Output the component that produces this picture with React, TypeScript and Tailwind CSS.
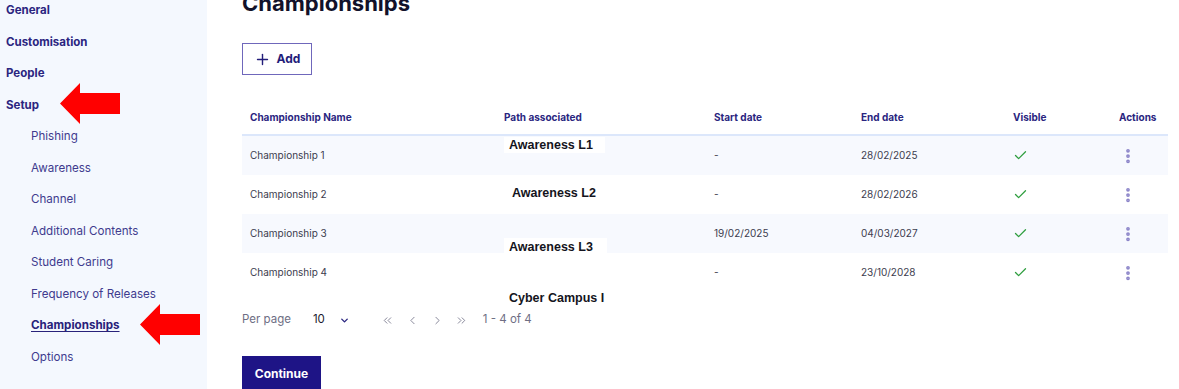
import React from "react";
import { ChevronLeft, ChevronRight, ChevronsLeft, ChevronsRight, ChevronDown, Plus, Check, EllipsisVertical } from "lucide-react";

// sidebar data
const topItems = ["General", "Customisation", "People", "Setup"];
const setupItems = [
    "Phishing",
    "Awareness",
    "Channel",
    "Additional Contents",
    "Student Caring",
    "Frequency of Releases",
    "Championships",
    "Options",
];

// table rows
const rows = [
    { name: "Championship 1", start: "-", end: "28/02/2025" },
    { name: "Championship 2", start: "-", end: "28/02/2026" },
    { name: "Championship 3", start: "19/02/2025", end: "04/03/2027" },
    { name: "Championship 4", start: "-", end: "23/10/2028" },
];

const gridCols = "grid grid-cols-[254px_210px_147px_152px_106px_1fr] items-center";

// red arrow callout
const RedArrow = ({ className }: { className: string }) => (
    <svg className={className} width="60" height="41" viewBox="0 0 60 41">
        <polygon points="0,20.5 20,0 20,10 60,10 60,31 20,31 20,41" fill="#ff0000" />
    </svg>
);

const Sidebar = () => {
    return (
        <aside className="relative w-[207px] shrink-0 bg-[#f4f8fe] min-h-[389px]">
            <ul className="flex flex-col mt-[-5px]">
                {topItems.map((item) => (
                    <li key={item} className="h-[31.5px] flex items-center pl-[6px] text-[11.5px] font-bold text-[#2b2580]">
                        {item}
                    </li>
                ))}
                {setupItems.map((item) => (
                    <li
                        key={item}
                        className={`h-[31.5px] flex items-center pl-[31px] text-[11.6px] ${
                            item === "Championships"
                                ? "font-bold underline underline-offset-2 text-[#28227a]"
                                : "text-[#403b8e]"
                        }`}
                    >
                        {item}
                    </li>
                ))}
            </ul>
            {/* callouts */}
            <RedArrow className="absolute left-[60px] top-[83px]" />
            <RedArrow className="absolute left-[140px] top-[304px]" />
        </aside>
    );
};

const App = () => {
    return (
        <div className="flex w-[1179px] h-[389px] overflow-hidden bg-white font-['Inter',sans-serif]">
            <Sidebar />

            <main className="flex-1 pl-[35px] pr-[11px]">
                <h1 className="text-[22px] font-bold leading-[28px] mt-[-11px] text-[#12122a]">Championships</h1>

                <button className="mt-[26px] h-[32px] w-[70px] border-[1.5px] border-[#6f67bb] flex items-center justify-center gap-[6px] text-[12px] font-bold text-[#231d7a]">
                    <Plus size={17} strokeWidth={2} />
                    Add
                </button>

                {/* table */}
                <div className="relative mt-[25px]">
                    <div className={`${gridCols} h-[36px] px-2 border-b-2 border-[#dce7fb] text-[10px] font-bold text-[#2a2580]`}>
                        <span>Championship Name</span>
                        <span>Path associated</span>
                        <span>Start date</span>
                        <span>End date</span>
                        <span>Visible</span>
                        <span>Actions</span>
                    </div>
                    {rows.map((row, index) => (
                        <div
                            key={row.name}
                            className={`${gridCols} h-[39px] px-2 text-[10px] text-[#3c3c4e] ${
                                index % 2 === 0 ? "bg-[#f7f9fe]" : "bg-white"
                            }`}
                        >
                            <span>{row.name}</span>
                            <span></span>
                            <span>{row.start}</span>
                            <span>{row.end}</span>
                            <span>
                                <Check size={15} strokeWidth={2} className="text-[#2f9e3f]" />
                            </span>
                            <span>
                                <EllipsisVertical size={18} strokeWidth={3} className="text-[#8c85c9]" />
                            </span>
                        </div>
                    ))}

                    {/* pasted path labels */}
                    <span className="absolute left-[262px] top-[37px] w-[101px] h-[16px] bg-white pl-[5px] leading-[16px] text-[12.5px] font-bold text-[#141420] font-['Liberation_Sans',sans-serif]">
                        Awareness L1
                    </span>
                    <span className="absolute left-[270px] top-[85px] leading-[16px] text-[12.5px] font-bold text-[#141420] font-['Liberation_Sans',sans-serif]">
                        Awareness L2
                    </span>
                    <span className="absolute left-[262px] top-[138px] w-[103px] h-[15px] bg-white pl-[5px] leading-[18px] text-[12.5px] font-bold text-[#141420] font-['Liberation_Sans',sans-serif]">
                        Awareness L3
                    </span>
                    <span className="absolute left-[267px] top-[190px] leading-[16px] text-[12.5px] font-bold text-[#141420] font-['Liberation_Sans',sans-serif]">
                        Cyber Campus I
                    </span>
                </div>

                {/* pagination */}
                <div className="flex items-center h-[28px] mt-[14px] text-[11.5px] text-[#6e6e84]">
                    <span>Per page</span>
                    <span className="ml-[22px] text-[#1c1c30]">10</span>
                    <ChevronDown size={11} strokeWidth={3} className="ml-[14px] text-[#2a2580]" />
                    <ChevronsLeft size={13} strokeWidth={1.5} className="ml-[31px]" />
                    <ChevronLeft size={13} strokeWidth={1.5} className="ml-[12px]" />
                    <ChevronRight size={13} strokeWidth={1.5} className="ml-[12px]" />
                    <ChevronsRight size={13} strokeWidth={1.5} className="ml-[11px]" />
                    <span className="ml-[15px]">1 - 4 of 4</span>
                </div>

                <button className="mt-[22px] h-[36px] w-[79px] bg-[#1e1486] text-white text-[12px] font-bold flex items-center justify-center">
                    Continue
                </button>
            </main>
        </div>
    );
};

// export
export default App;
